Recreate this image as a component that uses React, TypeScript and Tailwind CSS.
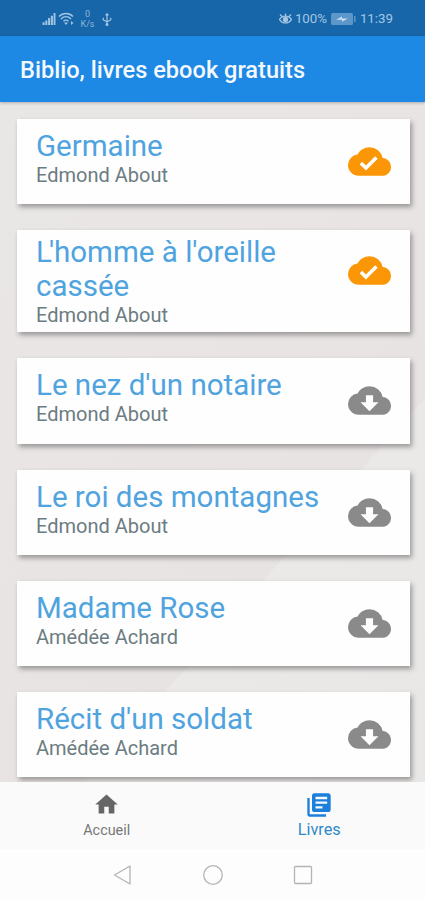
import { MdCloudDone, MdCloudDownload, MdHome, MdLibraryBooks } from "react-icons/md";

type Book = {
  title: string;
  author: string;
  downloaded: boolean;
};

const books: Book[] = [
  { title: "Germaine", author: "Edmond About", downloaded: true },
  { title: "L'homme à l'oreille cassée", author: "Edmond About", downloaded: true },
  { title: "Le nez d'un notaire", author: "Edmond About", downloaded: false },
  { title: "Le roi des montagnes", author: "Edmond About", downloaded: false },
  { title: "Madame Rose", author: "Amédée Achard", downloaded: false },
  { title: "Récit d'un soldat", author: "Amédée Achard", downloaded: false },
];

const StatusBar: React.FC = () => (
  <div className="flex h-9 shrink-0 items-center justify-between bg-[#1766a9] pr-[32px] pl-[42px] pt-[2px] text-[#a3c5e2]">
    <div className="flex items-center">
      <svg className="h-[12px] w-[14px]" viewBox="0 0 14 13" fill="currentColor">
        <path d="M0 10h2.200v3H0zM3 8h2.200v5H3zM6 5.500h2.200V13H6zM9 3h2.200v10H9zM12 0h2v13h-2z" />
      </svg>
      <svg className="ml-[2px] h-[14px] w-[17px]" viewBox="0 0 17 14" fill="none" stroke="currentColor" strokeWidth="1.400">
        <path d="M1 4.500C5 .5 11 .5 15 4.500M3 7c3-3 7-3 10 0M5.500 9.300c1.500-1.500 3.500-1.500 5 0" />
        <path d="M6 10.500h4L8 13zM13 9l2.500 2L13 13z" fill="currentColor" stroke="none" />
      </svg>
      <div className="ml-[5px] flex w-[15px] flex-col items-center text-[9px] leading-[10px] text-[#8db5d8]">
        <span>0</span>
        <span>K/s</span>
      </div>
      <svg className="ml-[7px] h-[13px] w-[10px]" viewBox="0 0 10 14" fill="none" stroke="currentColor" strokeWidth="1.300">
        <path d="M5 1v12M1 5v2.500l4 2 4-2V5M3.500 2.500 5 .8l1.500 1.700" />
        <circle cx="5" cy="12.300" r="1" fill="currentColor" />
      </svg>
    </div>
    <div className="flex items-center text-[13.3px]">
      <svg className="mr-[3px] h-[12px] w-[13px]" viewBox="0 0 13 12" fill="none" stroke="currentColor" strokeWidth="1.300">
        <path d="M.5 6.500c3-4.500 9-4.500 12 0-3 4.500-9 4.500-12 0zM1 1.500l2.200 2.200M12 1.500L9.800 3.700M6.500 .5v3" />
        <circle cx="6.500" cy="6.500" r="2" fill="currentColor" />
      </svg>
      <span className="w-[33px]">100%</span>
      <svg className="mr-[4px] ml-[3px] h-[12px] w-[25px]" viewBox="0 0 25 12">
        <rect x="0" y="0" width="22" height="12" rx="1.500" fill="#5d96c8" />
        <rect x="23" y="3" width="1.500" height="6" fill="#5d96c8" />
        <path d="M5 6.800l6-3.300v2h6l-6 3.300v-2z" fill="#c9def0" />
      </svg>
      <span>11:39</span>
    </div>
  </div>
);

// Tightens the gap between a leading capital L and its apostrophe
const BookTitle: React.FC<{ title: string }> = ({ title }) => (
  <h2 className="text-[29.5px] leading-[34px] text-[#4fa3df]">
    {title.startsWith("L'") ? (
      <>
        <span className="tracking-[-3px]">L</span>
        {title.slice(1)}
      </>
    ) : (
      title
    )}
  </h2>
);

const BookCard: React.FC<{ book: Book; tall: boolean }> = ({ book, tall }) => (
  <div
    className={`flex shrink-0 justify-between bg-[#fefefe] pr-[19px] pl-[19px] shadow-[2px_3px_5px_rgba(0,0,0,0.35)] ${
      tall ? "h-[102px] pt-[5px]" : "h-[85.25px] pt-[10px]"
    }`}
  >
    <div className="w-[290px]">
      <BookTitle title={book.title} />
      <p className="text-[20px] leading-[24px] text-[#6c7c81]">{book.author}</p>
    </div>
    {book.downloaded ? (
      <MdCloudDone className={`size-[43px] shrink-0 text-[#fb9706] ${tall ? "mt-[14px]" : "mt-[11px]"}`} />
    ) : (
      <MdCloudDownload className="mt-[11px] size-[43px] shrink-0 text-[#8a8a8a]" />
    )}
  </div>
);

const TabBar: React.FC = () => (
  <div className="flex h-[67px] shrink-0 bg-[#fafafa]">
    <div className="flex flex-1 flex-col items-center pt-[9px] pl-px text-[#666]">
      <MdHome className="size-[27px]" />
      <span className="mt-[4px] text-[14.4px] leading-[18px] text-[#777]">Accueil</span>
    </div>
    <div className="flex flex-1 flex-col items-center pt-[9px] pl-px text-[#2f8bc8]">
      <MdLibraryBooks className="size-[28px] text-[#1b7fdc]" />
      <span className="mt-px text-[16.3px] leading-[20px]">Livres</span>
    </div>
  </div>
);

const SystemNav: React.FC = () => (
  <div className="flex h-[51px] shrink-0 items-center justify-center gap-[70px] bg-[#fdfdfd] text-[#b4b4b4]">
    <svg className="size-5" viewBox="0 0 20 20" fill="none" stroke="currentColor" strokeWidth="1.300">
      <path d="M1.500 10 17 1v18z" strokeLinejoin="round" />
    </svg>
    <svg className="size-5" viewBox="0 0 20 20" fill="none" stroke="currentColor" strokeWidth="1.300">
      <circle cx="10" cy="10" r="9.300" />
    </svg>
    <svg className="size-5" viewBox="0 0 20 20" fill="none" stroke="currentColor" strokeWidth="1.300">
      <rect x="1.500" y="1.500" width="17" height="17" rx="1" />
    </svg>
  </div>
);

export default function App() {
  return (
    <div className="flex h-[900px] w-[425px] flex-col overflow-hidden font-[Roboto,sans-serif]">
      <StatusBar />
      <header className="z-10 flex h-[66px] shrink-0 items-center bg-[#1e88e5] pt-[3px] pl-5 shadow-[0_1px_3px_rgba(0,0,0,0.25)]">
        <h1 className="text-[23.6px] font-medium text-[#f4f9fe]">Biblio, livres ebook gratuits</h1>
      </header>
      <main className="flex h-[680px] shrink-0 flex-col gap-[26px] overflow-hidden bg-[linear-gradient(131.5deg,#e9e7e6_0%,#e7e3e2_66.8%,#ebe9e8_67%,#e9e7e6_100%)] pt-[17px] pr-[15px] pl-[17px]">
        {books.map((book) => (
          <BookCard key={book.title} book={book} tall={book.title.length > 22} />
        ))}
      </main>
      <TabBar />
      <SystemNav />
    </div>
  );
}
